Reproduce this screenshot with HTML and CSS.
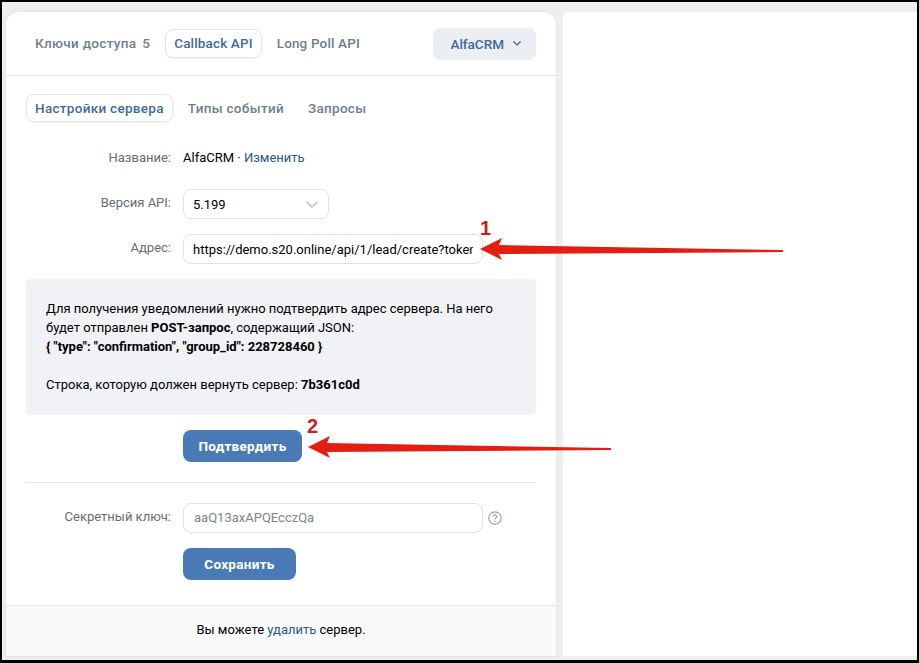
FILE: index.html
```html
<!DOCTYPE html>
<html lang="ru">
<head>
<meta charset="utf-8">
<title>Callback API</title>
<link rel="stylesheet" href="styles.css">
</head>
<body>
<div class="frame">
  <main class="panel">
    <nav class="topbar">
      <a class="tab">Ключи доступа<span class="count">5</span></a>
      <a class="tab tab-latin tab-active">Callback API</a>
      <a class="tab tab-latin">Long Poll API</a>
      <button class="server-btn">AlfaCRM
        <svg class="chev" width="8" height="5" viewBox="0 0 8 5"><path d="M.8.8 4 3.9 7.2.8" fill="none" stroke="#4a6f9c" stroke-width="1.4" stroke-linecap="round" stroke-linejoin="round"/></svg>
      </button>
    </nav>
    <div class="content">
      <nav class="subtabs">
        <a class="tab tab-active">Настройки сервера</a>
        <a class="tab">Типы событий</a>
        <a class="tab">Запросы</a>
      </nav>
      <div class="row row-name">
        <div class="label">Название:</div>
        <div class="value">AlfaCRM · <a class="link">Изменить</a></div>
      </div>
      <div class="row row-ver">
        <div class="label">Версия API:</div>
        <div class="select">5.199
          <svg width="12" height="7" viewBox="0 0 12 7"><path d="M.7.7 6 6l5.3-5.3" fill="none" stroke="#b4bcc6" stroke-width="1.3"/></svg>
        </div>
      </div>
      <div class="row row-addr">
        <div class="label">Адрес:</div>
        <div class="input input-addr"><span class="input-text">https://demo.s20.online/api/1/lead/create?token=abc</span></div>
      </div>
      <div class="notice">
        <p>Для получения уведомлений нужно подтвердить адрес сервера. На него будет отправлен <b>POST-запрос</b>, содержащий JSON:<br><b>{ "type": "confirmation", "group_id": 228728460 }</b></p>
        <p>Строка, которую должен вернуть сервер: <b>7b361c0d</b></p>
      </div>
      <div class="action action-confirm"><button class="btn btn-confirm">Подтвердить</button></div>
      <hr class="divider">
      <div class="row row-secret">
        <div class="label">Секретный ключ:</div>
        <div class="input input-muted"><span class="input-text">aaQ13axAPQEcczQa</span></div>
        <svg class="help" width="14" height="14" viewBox="0 0 14 14"><circle cx="7" cy="7" r="6.2" fill="none" stroke="#99a2ad" stroke-width="1.2"/><path d="M5.2 5.5a1.8 1.8 0 1 1 2.7 1.6c-.6.35-.9.7-.9 1.3" fill="none" stroke="#99a2ad" stroke-width="1.2"/><circle cx="7" cy="10.2" r=".8" fill="#99a2ad"/></svg>
      </div>
      <div class="action action-save"><button class="btn btn-save">Сохранить</button></div>
    </div>
    <footer class="foot">Вы можете <a class="link">удалить</a> сервер.</footer>
  </main>
  <aside class="side"></aside>
</div>
<svg class="arrow arrow-1" width="304" height="26" viewBox="0 0 304 26"><path d="M0 13 22 2l-3 7 284 5v2L19 18l3 6z" fill="#e31e12"/></svg>
<svg class="arrow arrow-2" width="304" height="26" viewBox="0 0 304 26"><path d="M0 13 22 2l-3 7 284 5v2L19 18l3 6z" fill="#e31e12"/></svg>
<span class="mark mark-1">1</span>
<span class="mark mark-2">2</span>
</body>
</html>
```
FILE: styles.css
```css
* { box-sizing: border-box; }
html, body { margin: 0; height: 100%; }
body {
  position: relative;
  width: 919px;
  height: 663px;
  overflow: hidden;
  font: 13px/18px Roboto, "Liberation Sans", sans-serif;
  color: #000;
}
.frame {
  display: flex;
  gap: 7px;
  width: 919px;
  height: 663px;
  padding: 10px 0 4px 4px;
  background: #edeef0;
  border: solid #000;
  border-width: 2px 2px 3px 2px;
}
.panel {
  display: flex;
  flex-direction: column;
  width: 550px;
  background: #fff;
  border-radius: 12px 12px 0 0;
  box-shadow: 0 0 0 1px #e3e5e9;
  overflow: hidden;
}
.side { flex: 1; background: #fff; border-radius: 4px 0 0 0; }
.topbar {
  display: flex;
  align-items: center;
  gap: 6px;
  height: 64px;
  padding: 0 20px;
  border-bottom: 1px solid #e3e5e9;
  flex: none;
}
.tab {
  display: block;
  padding: 5px 8px 6px;
  border: 1px solid transparent;
  border-radius: 8px;
  font-weight: 500;
  font-size: 13.5px;
  letter-spacing: .3px;
  line-height: 16px;
  color: #6f7d8d;
  white-space: nowrap;
}
.tab-latin { letter-spacing: .15px; }
.tab-active {
  color: #3f6a9c;
  border-color: #e3e5e9;
  box-shadow: 0 1px 2px rgba(0,0,0,.05);
}
.count { margin-left: 6px; }
.server-btn {
  display: flex;
  align-items: center;
  gap: 9px;
  height: 32px;
  margin-left: auto;
  padding: 0 15px 0 17px;
  border: 0;
  border-radius: 8px;
  background: #ebeef3;
  font: 500 13.5px/16px Roboto, "Liberation Sans", sans-serif;
  color: #3f6a9c;
}
.content { flex: 1; padding: 18px 20px 0; }
.subtabs { display: flex; gap: 6px; height: 28px; }
.subtabs .tab { height: 28px; }
.row { display: flex; align-items: center; }
.label {
  position: relative;
  top: -1px;
  width: 145px;
  margin-right: 12px;
  text-align: right;
  color: #626d7a;
}
.row-name { margin-top: 27px; height: 18px; }
.row-name .label { top: 0; }
.row-ver { margin-top: 22px; height: 30px; }
.row-addr { margin-top: 15px; height: 30px; }
.select, .input {
  display: flex;
  align-items: center;
  height: 30px;
  border: 1px solid #dce1e6;
  border-radius: 8px;
  background: #fff;
}
.select {
  justify-content: space-between;
  width: 146px;
  padding: 1px 10px 0 9px;
}
.input { width: 300px; padding: 0 9px; overflow: hidden; }
.input-addr { padding-top: 1px; }
.input-text { overflow: hidden; white-space: nowrap; }
.input-muted { padding-left: 10px; color: #7a8591; }
.notice {
  height: 136px;
  margin-top: 15px;
  padding: 20px;
  background: #f0f2f5;
  border-radius: 4px;
  line-height: 19px;
}
.notice p { margin: 0 0 19px; }
.notice b { font-weight: 700; }
.action { padding-left: 157px; }
.action-confirm { margin-top: 15px; }
.btn {
  display: block;
  height: 32px;
  border: 0;
  border-radius: 8px;
  background: #4a7ab5;
  color: #fff;
  font: 700 13.5px/16px Roboto, "Liberation Sans", sans-serif;
  letter-spacing: .3px;
}
.btn-confirm { width: 119px; }
.btn-save { width: 113px; }
.divider { height: 1px; margin: 20px 0 0; border: 0; background: #e3e5e9; }
.row-secret { margin-top: 20px; height: 30px; }
.help { margin-left: 5px; }
.action-save { margin-top: 15px; }
.foot {
  flex: none;
  height: 51px;
  padding-top: 15px;
  background: #f9fafb;
  border-top: 1px solid #e3e5e9;
  text-align: center;
}
.link { color: #2a5885; }
.arrow { position: absolute; }
.arrow-1 { left: 480px; top: 236px; }
.arrow-2 { left: 308px; top: 434px; }
.mark {
  position: absolute;
  font: 700 20px/20px "Liberation Sans", sans-serif;
  color: #c9201a;
}
.mark-1 { left: 480px; top: 218px; }
.mark-2 { left: 307px; top: 416px; }
```
